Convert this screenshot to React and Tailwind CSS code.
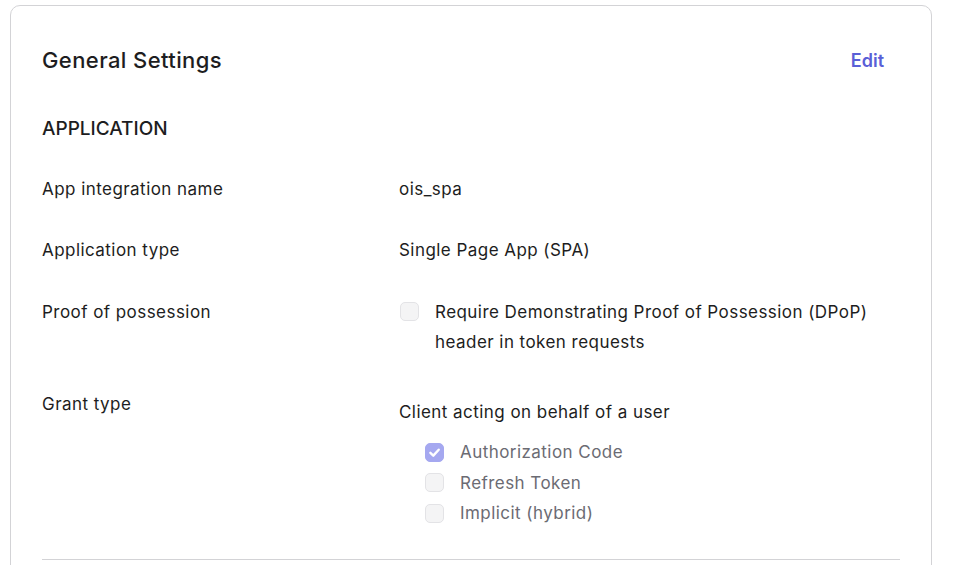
import React from "react";

function Box({ checked }) {
  return (
    <span
      className={
        "flex h-[19px] w-[19px] shrink-0 items-center justify-center rounded-[5px] border " +
        (checked ? "border-[#a5a8f0] bg-[#a5a8f0]" : "border-[#e3e3e6] bg-[#f4f4f5]")
      }
    >
      {checked && (
        <svg width="13" height="13" viewBox="0 0 12 12" fill="none">
          <path d="M2.2 6.3 L4.9 8.9 L9.9 3.4" stroke="white" strokeWidth="2.2" strokeLinecap="round" strokeLinejoin="round" />
        </svg>
      )}
    </span>
  );
}

export default function App() {
  return (
    <div className="h-[565px] overflow-hidden bg-white pl-[10px] pt-[5px]" style={{ fontFamily: "Inter, 'Noto Sans', sans-serif" }}>
      <div className="h-[600px] w-[922px] rounded-t-[10px] border border-[#d3d3d6] px-[31px] pt-[40px] text-[#1d1d21]">
        <div className="flex h-[28px] items-center justify-between">
          <h2 className="text-[22px] font-medium tracking-[0.4px]">General Settings</h2>
          <button className="mr-[16px] text-[18px] font-semibold text-[#5a5fd7]">Edit</button>
        </div>
        <div className="mt-[43px] flex h-[24px] items-center text-[19px] font-medium">APPLICATION</div>

        <div className="mt-[33px] flex text-[17px] leading-[30px] tracking-[0.45px]">
          <div className="w-[357px] shrink-0">App integration name</div>
          <div>ois_spa</div>
        </div>
        <div className="mt-[31px] flex text-[17px] leading-[30px] tracking-[0.45px]">
          <div className="w-[357px] shrink-0">Application type</div>
          <div>Single Page App (SPA)</div>
        </div>
        <div className="mt-[32px] flex text-[17px] leading-[30px] tracking-[0.45px]">
          <div className="w-[357px] shrink-0">Proof of possession</div>
          <div className="flex flex-1 gap-[16px] pl-[1px]">
            <div className="pt-[5px]"><Box /></div>
            <div className="flex-1">Require Demonstrating Proof of Possession (DPoP) header in token requests</div>
          </div>
        </div>
        <div className="mt-[32px] flex text-[17px] leading-[30px] tracking-[0.45px]">
          <div className="w-[357px] shrink-0">Grant type</div>
          <div className="pt-[8px]">
            <div>Client acting on behalf of a user</div>
            <div className="mt-[10px] flex flex-col pl-[26px] text-[#6b6b73]">
              {[["Authorization Code", true], ["Refresh Token", false], ["Implicit (hybrid)", false]].map(([t, c]) => (
                <div key={t} className="flex h-[30.5px] items-center gap-[16px]">
                  <Box checked={c} />
                  <span>{t}</span>
                </div>
              ))}
            </div>
          </div>
        </div>
        <div className="mt-[30px] h-px bg-[#d3d3d6]" />
      </div>
    </div>
  );
}
